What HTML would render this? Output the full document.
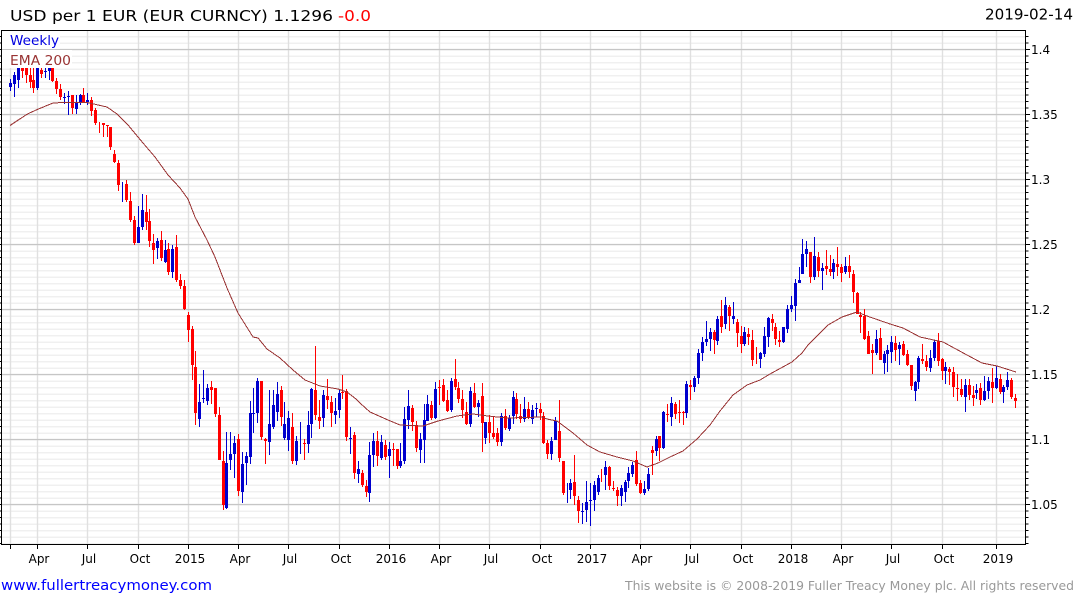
<!DOCTYPE html>
<html><head><meta charset="utf-8"><style>html,body{margin:0;padding:0;background:#fff;width:1075px;height:600px;overflow:hidden}svg{display:block}text{font-family:"DejaVu Sans",sans-serif}</style></head><body>
<svg width="1075" height="600" viewBox="0 0 1075 600" xmlns="http://www.w3.org/2000/svg">
<path d="M513.5 36V544" stroke="#f0f0f0" stroke-width="1023" stroke-dasharray="1.5 5" fill="none"/>
<path d="M10.5 31V544M37.5 31V544M87.5 31V544M138.5 31V544M188.5 31V544M238.5 31V544M288.5 31V544M339.5 31V544M389.5 31V544M439.5 31V544M489.5 31V544M540.5 31V544M590.5 31V544M640.5 31V544M690.5 31V544M741.5 31V544M791.5 31V544M841.5 31V544M891.5 31V544M942.5 31V544M996.5 31V544" stroke="#e0e0e0" stroke-width="1.4" fill="none"/>
<path d="M2 49.5H1025M2 114.5H1025M2 179.5H1025M2 244.5H1025M2 309.5H1025M2 374.5H1025M2 439.5H1025M2 504.5H1025" stroke="#c6c6c6" stroke-width="1.3" fill="none"/>
<g fill="none" shape-rendering="crispEdges">
<path stroke="#ff0000" stroke-width="1" d="M22.5 68V78M26.5 68V83M30.5 68V88M33.5 68V93M41.5 68V78M52.5 50V82M56.5 78V94M60.5 84V100M72.5 95V114M83.5 88V103M91.5 97V116M95.5 108V125M99.5 122V133M103.5 123V137M107.5 125V137M110.5 127V150M114.5 150V163M118.5 160V191M126.5 180V202M130.5 192V222M134.5 216V245M146.5 195V230M149.5 209V247M153.5 234V264M161.5 231V261M168.5 243V275M176.5 235V282M180.5 274V289M184.5 280V310M188.5 312V342M192.5 326V380M195.5 351V425M211.5 381V404M215.5 388V417M219.5 407V460M223.5 451V510M238.5 434V496M261.5 381V440M265.5 438V464M281.5 386V426M292.5 413V464M304.5 439V460M315.5 346V420M319.5 400V429M327.5 379V409M331.5 396V427M342.5 375V399M346.5 389V441M354.5 432V479M362.5 470V487M366.5 480V497M377.5 431V466M385.5 440V460M393.5 443V466M397.5 449V469M412.5 405V431M416.5 421V452M431.5 401V420M439.5 380V405M443.5 379V402M447.5 390V412M455.5 359V390M458.5 382V403M462.5 390V418M466.5 402V425M474.5 383V408M482.5 383V452M489.5 415V443M493.5 416V439M497.5 428V446M505.5 409V430M516.5 393V419M520.5 404V423M528.5 402V419M540.5 403V420M543.5 412V444M547.5 440V459M559.5 400V462M563.5 461V495M574.5 455V505M578.5 496V523M601.5 469V482M609.5 466V490M613.5 481V491M617.5 487V506M636.5 451V486M640.5 480V494M652.5 446V475M659.5 436V461M667.5 404V422M675.5 402V419M679.5 400V423M683.5 411V425M690.5 380V400M714.5 330V354M721.5 300V333M729.5 305V331M737.5 319V347M741.5 326V353M748.5 328V345M752.5 330V366M756.5 347V364M772.5 314V331M775.5 323V345M779.5 331V347M810.5 252V283M818.5 252V277M826.5 250V275M830.5 255V276M837.5 247V276M841.5 264V282M849.5 255V278M853.5 270V303M857.5 292V314M860.5 312V333M864.5 309V340M868.5 331V354M872.5 344V374M880.5 328V360M895.5 336V361M903.5 341V356M907.5 350V366M911.5 365V390M922.5 344V364M926.5 355V371M938.5 333V366M942.5 358V380M949.5 367V385M953.5 367V397M957.5 374V401M961.5 379V397M969.5 379V400M973.5 386V406M980.5 383V405M992.5 368V403M1000.5 374V394M1011.5 378V399M1015.5 394V408"/>
<path stroke="#ff0000" stroke-width="3" d="M22.5 68V71M26.5 68V75M30.5 75V82M33.5 80V88M41.5 70V74M52.5 68V81M56.5 81V89M60.5 89V97M72.5 95V108M83.5 95V102M91.5 100V111M95.5 110V123M103.5 123V125M107.5 125V126M110.5 127V147M114.5 154V162M118.5 163V185M126.5 184V200M130.5 201V220M134.5 220V243M146.5 212V222M149.5 221V241M153.5 243V250M161.5 240V258M168.5 249V272M176.5 247V280M180.5 280V286M184.5 286V309M188.5 315V330M192.5 329V365M195.5 367V413M211.5 387V390M215.5 388V414M219.5 415V460M223.5 461V505M238.5 439V491M261.5 381V437M265.5 439V441M281.5 390V417M292.5 427V461M304.5 443V444M315.5 390V415M319.5 417V421M327.5 396V400M331.5 402V413M342.5 392V393M346.5 391V437M354.5 435V473M362.5 473V485M366.5 486V492M377.5 441V456M385.5 445V457M393.5 449V450M397.5 449V466M412.5 408V422M416.5 425V448M431.5 405V418M439.5 387V388M443.5 385V401M447.5 400V411M455.5 379V387M458.5 388V399M462.5 399V410M466.5 412V424M474.5 393V407M482.5 396V423M489.5 422V433M493.5 433V437M497.5 433V442M505.5 416V428M516.5 399V414M520.5 416V419M528.5 409V418M540.5 409V413M543.5 416V443M547.5 443V454M559.5 431V458M563.5 461V493M574.5 482V496M578.5 500V511M609.5 467V486M613.5 488V489M617.5 490V496M636.5 460V484M640.5 483V493M652.5 450V453M659.5 436V448M667.5 414V415M675.5 404V414M679.5 412V413M683.5 412V413M690.5 385V387M714.5 332V340M721.5 316V327M729.5 307V316M737.5 322V333M741.5 336V344M748.5 334V337M752.5 340V360M772.5 319V323M775.5 327V339M779.5 340V342M810.5 252V277M818.5 257V271M826.5 266V269M830.5 269V272M837.5 264V267M841.5 267V273M849.5 266V272M853.5 274V292M857.5 293V314M860.5 315V317M864.5 316V339M868.5 336V354M872.5 350V353M880.5 338V360M895.5 343V350M903.5 344V355M907.5 354V365M911.5 365V386M922.5 359V361M926.5 361V367M938.5 341V361M942.5 359V371M949.5 369V372M953.5 372V387M957.5 388V389M961.5 389V395M969.5 385V395M973.5 395V398M980.5 388V400M992.5 382V388M1000.5 379V392M1011.5 380V397M1015.5 398V401"/>
<path stroke="#0000cd" stroke-width="1" d="M10.5 79V91M14.5 72V97M18.5 68V88M37.5 68V90M45.5 68V78M49.5 68V80M64.5 93V104M68.5 91V115M76.5 95V114M80.5 94V105M87.5 93V105M122.5 182V202M138.5 206V243M142.5 194V230M157.5 238V259M165.5 240V263M172.5 245V278M199.5 384V427M203.5 370V403M207.5 384V405M226.5 432V509M230.5 432V470M234.5 436V478M242.5 452V503M246.5 452V485M250.5 401V464M253.5 388V433M257.5 378V423M269.5 390V455M273.5 390V429M277.5 382V421M284.5 402V440M288.5 411V451M296.5 436V465M300.5 422V454M308.5 411V453M311.5 388V438M323.5 390V427M335.5 398V424M339.5 390V418M350.5 427V454M358.5 461V483M369.5 442V502M373.5 433V467M381.5 435V460M389.5 442V478M400.5 443V468M404.5 407V464M408.5 390V429M420.5 433V463M424.5 404V463M427.5 395V421M435.5 382V419M451.5 378V412M470.5 387V427M478.5 400V417M485.5 422V444M501.5 413V446M509.5 415V431M513.5 391V424M524.5 397V422M532.5 405V424M536.5 403V417M551.5 437V460M555.5 417V440M567.5 483V503M570.5 479V499M582.5 503V524M586.5 481V522M590.5 483V526M594.5 481V511M598.5 475V495M605.5 461V490M621.5 485V506M625.5 480V502M628.5 467V488M632.5 462V477M644.5 481V495M648.5 468V491M656.5 436V456M663.5 411V449M671.5 397V426M686.5 381V418M694.5 376V392M698.5 349V384M702.5 337V361M706.5 321V346M710.5 328V351M717.5 316V345M725.5 297V329M733.5 302V324M744.5 327V346M760.5 352V368M764.5 327V357M768.5 317V347M783.5 327V343M787.5 305V333M791.5 296V312M795.5 279V321M799.5 267V283M802.5 239V274M806.5 241V267M814.5 237V280M822.5 263V290M833.5 259V279M845.5 257V274M876.5 330V355M884.5 351V374M887.5 345V372M891.5 336V363M899.5 342V365M915.5 381V401M918.5 356V389M930.5 350V372M934.5 340V361M945.5 362V384M965.5 379V412M976.5 384V399M984.5 376V401M988.5 377V399M996.5 366V389M1003.5 385V403M1007.5 372V390"/>
<path stroke="#0000cd" stroke-width="3" d="M10.5 83V87M14.5 75V84M18.5 68V80M37.5 68V88M45.5 71V72M49.5 68V71M64.5 97V98M68.5 96V97M76.5 102V109M80.5 95V102M87.5 100V102M138.5 227V243M142.5 210V227M157.5 241V248M165.5 250V262M172.5 249V272M199.5 402V419M203.5 398V399M207.5 388V401M226.5 463V508M230.5 454V460M234.5 443V454M242.5 464V492M246.5 456V463M250.5 413V457M253.5 413V414M257.5 381V413M269.5 424V442M273.5 405V427M277.5 394V412M284.5 424V438M288.5 418V440M296.5 441V461M308.5 425V444M311.5 389V424M323.5 395V418M335.5 411V415M339.5 393V410M350.5 438V439M358.5 469V474M369.5 455V493M373.5 441V455M381.5 442V458M389.5 449V456M400.5 461V466M404.5 419V461M408.5 406V420M420.5 439V450M424.5 420V440M427.5 404V421M435.5 389V418M451.5 381V410M470.5 391V424M478.5 403V407M485.5 422V438M501.5 416V442M509.5 418V429M513.5 397V416M524.5 409V419M532.5 410V419M536.5 408V409M551.5 441V454M555.5 421V440M570.5 483V490M582.5 511V512M586.5 502V510M590.5 500V501M594.5 485V500M598.5 478V492M605.5 467V475M621.5 488V496M625.5 482V492M628.5 473V481M632.5 465V474M644.5 489V493M648.5 474V489M656.5 439V451M663.5 412V448M671.5 403V417M686.5 384V413M694.5 378V387M698.5 353V378M702.5 342V353M706.5 339V342M710.5 332V339M717.5 319V341M725.5 305V324M733.5 316V319M744.5 332V344M760.5 353V359M764.5 336V354M768.5 318V337M783.5 327V342M787.5 309V329M791.5 305V309M795.5 283V306M799.5 280V283M802.5 254V274M806.5 249V254M814.5 256V277M822.5 268V271M833.5 263V272M845.5 266V272M876.5 339V353M884.5 354V363M887.5 350V354M891.5 342V352M899.5 345V349M915.5 382V391M918.5 358V382M930.5 358V368M934.5 342V358M945.5 367V371M965.5 385V397M976.5 390V393M984.5 391V400M988.5 381V391M996.5 378V388M1003.5 387V392M1007.5 380V387"/>
<path stroke="#993333" stroke-width="1" d="M10 125.5L19 119.5 28 113.7 37.7 109.3 53 103 67 102.3 88 102.7 107 107 117 114 128 125 143 143 155 157 168 175 180 188 188 199 195 217 207 240 215 257 227 288 238 313 253 337 258 338 267 349 280 358 293 370 305 380 320 386 338 389 347 392 356 399 360 403 370 412 388 420 400 425 423 426 438 421 457 416 473 414 488 416 507 418 542 417 547 419 557 421 573 433 587 445 600 452 617 457 633 461 647 467 658 463 670 457 683 451 697 439 710 425 720 411 733 395 747 385 760 380 770 374 792 362 802 353 808 345 828 325 842 317 857 312 867 316 890 324 903 328 920 337 943 342 967 355 982 363 997 366 1016 372"/>
</g>
<rect x="2" y="31" width="58" height="18" fill="#fff"/>
<rect x="2" y="50" width="70" height="18" fill="#fff"/>
<g fill="none" stroke="#000" shape-rendering="crispEdges">
<path d="M1.5 30.5H1025.5V544.5H1.5Z" stroke-width="1"/>
<path d="M0.5 36V544" stroke-width="2" stroke-dasharray="1 5.5"/>
<path d="M1027 36V544" stroke-width="3" stroke-dasharray="1 5.5"/>
<path d="M1026 49.5h4M1026 114.5h4M1026 179.5h4M1026 244.5h4M1026 309.5h4M1026 374.5h4M1026 439.5h4M1026 504.5h4"/>
<path d="M10.5 545v4M37.5 545v4M87.5 545v4M138.5 545v4M188.5 545v4M238.5 545v4M288.5 545v4M339.5 545v4M389.5 545v4M439.5 545v4M489.5 545v4M540.5 545v4M590.5 545v4M640.5 545v4M690.5 545v4M741.5 545v4M791.5 545v4M841.5 545v4M891.5 545v4M942.5 545v4M996.5 545v4"/>
</g>
<text x="10" y="21" font-size="15" fill="#000" textLength="323" lengthAdjust="spacingAndGlyphs" xml:space="preserve">USD per 1 EUR (EUR CURNCY) 1.1296</text>
<text x="338" y="21" font-size="15" fill="#ff0000" textLength="33" lengthAdjust="spacingAndGlyphs">-0.0</text>
<text x="985" y="19.5" font-size="15" fill="#000" textLength="88" lengthAdjust="spacingAndGlyphs">2019-02-14</text>
<text x="10" y="45" font-size="13.5" fill="#0000e0" textLength="49" lengthAdjust="spacingAndGlyphs">Weekly</text>
<text x="10" y="65" font-size="13.5" fill="#993333" textLength="61" lengthAdjust="spacingAndGlyphs">EMA 200</text>
<g font-size="12" fill="#000">
<text x="1031" y="54">1.4</text><text x="1031" y="119">1.35</text><text x="1031" y="184">1.3</text><text x="1031" y="249">1.25</text><text x="1031" y="314">1.2</text><text x="1031" y="379">1.15</text><text x="1031" y="444">1.1</text><text x="1031" y="509">1.05</text>
</g>
<g font-size="12" fill="#000" text-anchor="middle">
<text x="39" y="563">Apr</text><text x="89" y="563">Jul</text><text x="140" y="563">Oct</text><text x="190" y="563">2015</text><text x="240" y="563">Apr</text><text x="290" y="563">Jul</text><text x="341" y="563">Oct</text><text x="391" y="563">2016</text><text x="441" y="563">Apr</text><text x="491" y="563">Jul</text><text x="542" y="563">Oct</text><text x="592" y="563">2017</text><text x="642" y="563">Apr</text><text x="692" y="563">Jul</text><text x="743" y="563">Oct</text><text x="793" y="563">2018</text><text x="843" y="563">Apr</text><text x="893" y="563">Jul</text><text x="944" y="563">Oct</text><text x="998" y="563">2019</text>
</g>
<text x="1" y="590" font-size="14" fill="#0000ff" textLength="211" lengthAdjust="spacingAndGlyphs">www.fullertreacymoney.com</text>
<text x="625" y="590" font-size="12.5" fill="#999999" textLength="449" lengthAdjust="spacingAndGlyphs">This website is © 2008-2019 Fuller Treacy Money plc. All rights reserved</text>
</svg>
</body></html>
